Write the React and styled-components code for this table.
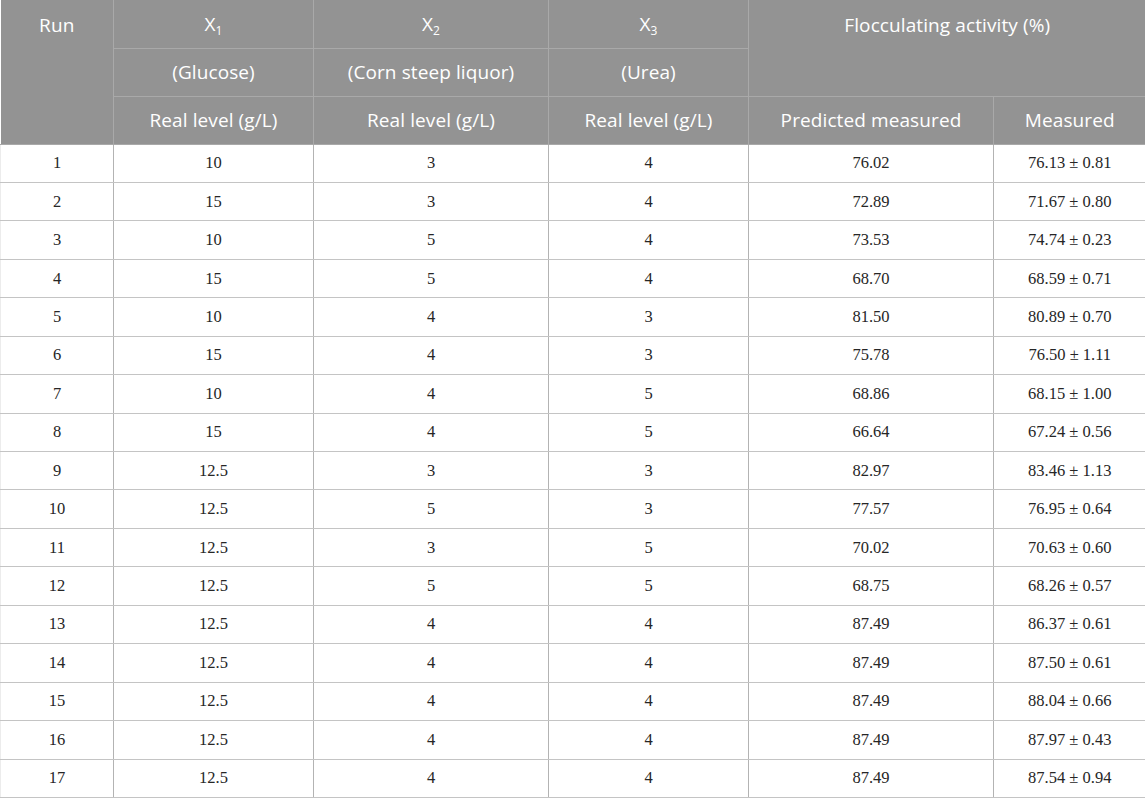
import React from "react";
import styled, { createGlobalStyle } from "styled-components";

const GlobalStyle = createGlobalStyle`
  html, body {
    margin: 0;
    padding: 0;
    background: #ffffff;
  }
`;

const rows = [
  [1, "10", "3", "4", "76.02", "76.13 ± 0.81"],
  [2, "15", "3", "4", "72.89", "71.67 ± 0.80"],
  [3, "10", "5", "4", "73.53", "74.74 ± 0.23"],
  [4, "15", "5", "4", "68.70", "68.59 ± 0.71"],
  [5, "10", "4", "3", "81.50", "80.89 ± 0.70"],
  [6, "15", "4", "3", "75.78", "76.50 ± 1.11"],
  [7, "10", "4", "5", "68.86", "68.15 ± 1.00"],
  [8, "15", "4", "5", "66.64", "67.24 ± 0.56"],
  [9, "12.5", "3", "3", "82.97", "83.46 ± 1.13"],
  [10, "12.5", "5", "3", "77.57", "76.95 ± 0.64"],
  [11, "12.5", "3", "5", "70.02", "70.63 ± 0.60"],
  [12, "12.5", "5", "5", "68.75", "68.26 ± 0.57"],
  [13, "12.5", "4", "4", "87.49", "86.37 ± 0.61"],
  [14, "12.5", "4", "4", "87.49", "87.50 ± 0.61"],
  [15, "12.5", "4", "4", "87.49", "88.04 ± 0.66"],
  [16, "12.5", "4", "4", "87.49", "87.97 ± 0.43"],
  [17, "12.5", "4", "4", "87.49", "87.54 ± 0.94"],
];

const widths = [113, 200, 235, 200, 245, 152];

const Table = styled.table`
  width: 1145px;
  table-layout: fixed;
  border-collapse: collapse;
  border-spacing: 0;
`;

const HeadRow = styled.tr`
  height: 48px;
`;

const Th = styled.th`
  background: #939393;
  color: #ffffff;
  font-family: "Open Sans", "Noto Sans", sans-serif;
  font-weight: 400;
  font-size: 19px;
  letter-spacing: 0.1px;
  line-height: 26px;
  text-align: center;
  vertical-align: ${(p) => (p.$top ? "top" : "middle")};
  padding: ${(p) => (p.$top ? "12px 6px 0" : "0 6px")};
  border: 1px solid #a9a9a9;
  border-top: none;
  &:first-child {
    border-left: none;
  }
  &:last-child {
    border-right: none;
  }
`;

const Sub = styled.sub`
  font-size: 12px;
  line-height: 0;
  vertical-align: -4px;
`;

const BodyRow = styled.tr`
  height: 38.45px;
`;

const Td = styled.td`
  font-family: "Liberation Serif", "Times New Roman", serif;
  font-size: 16.5px;
  color: #262626;
  text-align: center;
  vertical-align: middle;
  padding: 0 6px;
  border: 1px solid #c4c4c4;
  border-left-color: #b3b3b3;
  border-right-color: #b3b3b3;
  &:first-child {
    border-left: 1px solid #ececec;
  }
  &:last-child {
    border-right: none;
  }
`;

export default function App() {
  return (
    <>
      <GlobalStyle />
      <Table>
        <colgroup>
          {widths.map((w, i) => (
            <col key={i} style={{ width: w }} />
          ))}
        </colgroup>
        <thead>
          <HeadRow>
            <Th rowSpan={3} $top>
              Run
            </Th>
            <Th>
              X<Sub>1</Sub>
            </Th>
            <Th>
              X<Sub>2</Sub>
            </Th>
            <Th>
              X<Sub>3</Sub>
            </Th>
            <Th colSpan={2} rowSpan={2} $top>
              Flocculating activity (%)
            </Th>
          </HeadRow>
          <HeadRow>
            <Th>(Glucose)</Th>
            <Th>(Corn steep liquor)</Th>
            <Th>(Urea)</Th>
          </HeadRow>
          <HeadRow>
            <Th>Real level (g/L)</Th>
            <Th>Real level (g/L)</Th>
            <Th>Real level (g/L)</Th>
            <Th>Predicted measured</Th>
            <Th>Measured</Th>
          </HeadRow>
        </thead>
        <tbody>
          {rows.map((r) => (
            <BodyRow key={r[0]}>
              {r.map((c, i) => (
                <Td key={i}>{c}</Td>
              ))}
            </BodyRow>
          ))}
        </tbody>
      </Table>
    </>
  );
}
